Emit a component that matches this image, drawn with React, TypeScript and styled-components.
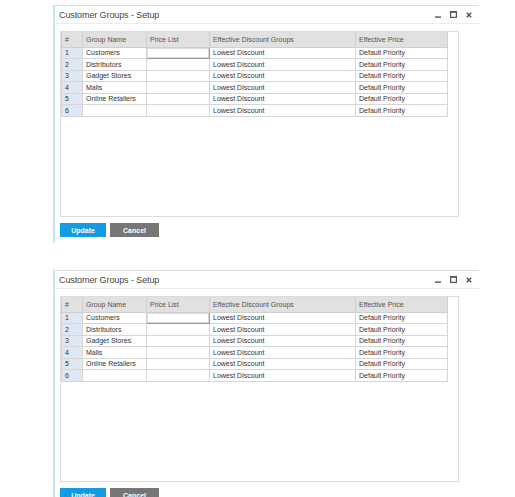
import React from "react";
import styled, { createGlobalStyle } from "styled-components";

const Global = createGlobalStyle`
  html, body { margin: 0; padding: 0; background: #ffffff; }
  body { font-family: "Liberation Sans", Arial, sans-serif; color: #333; overflow: hidden; }
`;

const Page = styled.div`
  display: flex;
  flex-direction: column;
  gap: 27px;
  padding: 5px 0 0 53px;
`;

const Window = styled.section`
  width: 424px;
  border-top: 1px solid #dcdcdc;
  border-left: 2px solid #c7e5ec;
  background: #fff;
  flex-shrink: 0;
`;

const TitleBar = styled.header`
  display: flex;
  align-items: center;
  justify-content: space-between;
  height: 17px;
  padding: 0 7px 0 4px;
  border-bottom: 1px solid #ececec;
`;

const Title = styled.span`
  font-size: 9px;
  color: #444;
  letter-spacing: -0.1px;
`;

const Controls = styled.div`
  display: flex;
  align-items: center;
  gap: 9px;
  color: #555;
`;

const Body = styled.div`
  padding: 7px 0 6px 5px;
`;

const Panel = styled.div`
  width: 397px;
  height: 184px;
  border: 1px solid #dcdcdc;
  background: #fff;
`;

const Table = styled.table`
  border-collapse: collapse;
  table-layout: fixed;
  width: 386px;
  font-size: 7px;
  color: #333;
`;

const Th = styled.th<{ $w: number }>`
  width: ${(p) => p.$w}px;
  height: 15px;
  padding: 0 3px;
  background: #e1e1e1;
  border: 1px solid #cfcfcf;
  border-top: none;
  text-align: left;
  font-weight: normal;
  color: #555;
  box-sizing: border-box;
  white-space: nowrap;
  overflow: hidden;
`;

const Td = styled.td<{ $num?: boolean }>`
  height: 11.5px;
  padding: 0 3px;
  border: 1px solid #d6d6d6;
  background: ${(p) => (p.$num ? "#dfe8f2" : "#fff")};
  box-sizing: border-box;
  white-space: nowrap;
  overflow: hidden;
  line-height: 9px;
`;

const EditTd = styled.td`
  height: 11.5px;
  padding: 0;
  border: 1px solid #999;
  box-shadow: inset 0 0 0 0.5px #bbb;
  background: #fff;
  box-sizing: border-box;
`;

const Buttons = styled.div`
  display: flex;
  gap: 4px;
  margin-top: 6px;
`;

const Button = styled.button<{ $primary?: boolean }>`
  height: 14px;
  width: ${(p) => (p.$primary ? 46 : 49)}px;
  padding: 0;
  border: none;
  background: ${(p) => (p.$primary ? "#139be3" : "#767676")};
  color: #fff;
  font-family: "Liberation Sans", Arial, sans-serif;
  font-size: 7px;
  font-weight: bold;
  cursor: pointer;
`;

const rows = [
  ["Customers"],
  ["Distributors"],
  ["Gadget Stores"],
  ["Malls"],
  ["Online Retailers"],
  [""],
];

const WindowIcons = () => (
  <Controls>
    <svg width="6" height="7" viewBox="0 0 6 7">
      <rect x="0" y="5.4" width="6" height="1.4" fill="#555" />
    </svg>
    <svg width="7" height="7" viewBox="0 0 7 7">
      <rect x="0.6" y="0.6" width="5.8" height="5.8" fill="none" stroke="#555" strokeWidth="1.2" />
      <rect x="0.6" y="0.6" width="5.8" height="1.2" fill="#555" />
    </svg>
    <svg width="6" height="6" viewBox="0 0 6 6">
      <path d="M0.8 0.8 L5.2 5.2 M5.2 0.8 L0.8 5.2" stroke="#555" strokeWidth="1.5" />
    </svg>
  </Controls>
);

const SetupWindow = () => (
  <Window>
    <TitleBar>
      <Title>Customer Groups - Setup</Title>
      <WindowIcons />
    </TitleBar>
    <Body>
      <Panel>
        <Table>
          <thead>
            <tr>
              <Th $w={21}>#</Th>
              <Th $w={64}>Group Name</Th>
              <Th $w={63}>Price List</Th>
              <Th $w={146}>Effective Discount Groups</Th>
              <Th $w={92}>Effective Price</Th>
            </tr>
          </thead>
          <tbody>
            {rows.map((r, i) => (
              <tr key={i}>
                <Td $num>{i + 1}</Td>
                <Td>{r[0]}</Td>
                {i === 0 ? <EditTd /> : <Td />}
                <Td>Lowest Discount</Td>
                <Td>Default Priority</Td>
              </tr>
            ))}
          </tbody>
        </Table>
      </Panel>
      <Buttons>
        <Button $primary>Update</Button>
        <Button>Cancel</Button>
      </Buttons>
    </Body>
  </Window>
);

export default function App() {
  return (
    <>
      <Global />
      <Page>
        <SetupWindow />
        <SetupWindow />
      </Page>
    </>
  );
}
